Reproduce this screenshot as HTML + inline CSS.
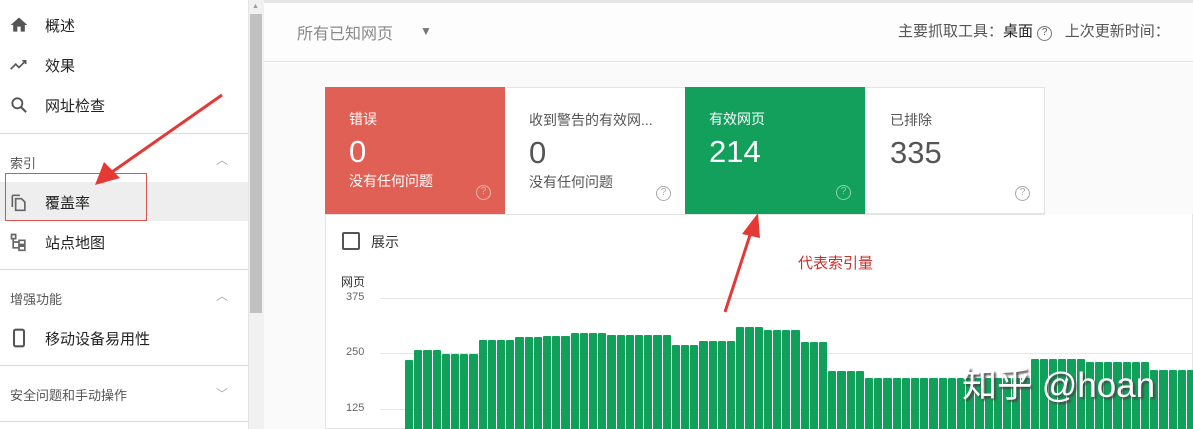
<!DOCTYPE html>
<html><head><meta charset="utf-8">
<style>
*{margin:0;padding:0;box-sizing:border-box}
body{width:1193px;height:429px;overflow:hidden;background:#fff;font-family:"Liberation Sans","Noto Sans CJK SC",sans-serif;position:relative;color:#333}
.abs{position:absolute}
.nav{position:absolute;left:0;width:248px;height:40px;font-size:15px;color:#222}
.nav span{position:absolute;left:45px;top:10px}
.nav svg{position:absolute;left:9px;top:10px}
.sec{position:absolute;left:10px;font-size:13px;color:#555}
.chev{position:absolute;left:216px;font-size:12px;color:#aaa}
.hr{position:absolute;left:0;width:248px;height:1px;background:#ddd}
.card{position:absolute;top:87px;width:180px;height:127px;padding:22px 24px}
.card .t{font-size:14px}
.card .n{font-size:31px;margin-top:6px;line-height:34px}
.card .s{font-size:14px;margin-top:2px}
.card .q{position:absolute;right:14px;top:98px;width:15px;height:15px;border:1.5px solid;border-radius:50%;font-size:10px;text-align:center;line-height:12px}
.grid{position:absolute;left:380px;width:813px;height:1px;background:#e6e6e6}
.yl{position:absolute;left:346px;font-size:11px;color:#666}
</style></head><body>
<div class="nav" style="top:5px"><svg width="20" height="20" viewBox="0 0 24 24"><path d="M10 20v-6h4v6h5v-8h3L12 3 2 12h3v8z" fill="#555"/></svg><span>概述</span></div>
<div class="nav" style="top:45px"><svg width="20" height="20" viewBox="0 0 24 24"><path d="M2 17l6-6 4 4 8-8M16 7h4v4" fill="none" stroke="#555" stroke-width="2"/></svg><span>效果</span></div>
<div class="nav" style="top:85px"><svg width="20" height="20" viewBox="0 0 24 24"><circle cx="10" cy="10" r="6" fill="none" stroke="#555" stroke-width="2.2"/><path d="M14.5 14.5l6 6" stroke="#555" stroke-width="2.5"/></svg><span>网址检查</span></div>
<div class="hr" style="top:133px"></div>
<div class="sec" style="top:153px">索引</div><div class="chev" style="top:151px">︿</div>
<div class="abs" style="left:0;top:182px;width:248px;height:39px;background:#eeeeee"></div>
<div class="nav" style="top:182px"><svg width="20" height="20" viewBox="0 0 24 24"><path d="M4 4v14M4 4h9" fill="none" stroke="#666" stroke-width="2"/><path d="M8 8h7l4 4v10H8z" fill="none" stroke="#666" stroke-width="2"/></svg><span>覆盖率</span></div>
<div class="abs" style="left:5px;top:173px;width:142px;height:48px;border:1.5px solid #d9534f"></div>
<div class="nav" style="top:222px"><svg width="20" height="20" viewBox="0 0 24 24"><path d="M3 3h5v5H3zM12 10h7v5h-7zM12 17h7v5h-7zM5 8v11h7M5 12h7" fill="none" stroke="#666" stroke-width="2"/></svg><span>站点地图</span></div>
<div class="hr" style="top:269px"></div>
<div class="sec" style="top:289px">增强功能</div><div class="chev" style="top:287px">︿</div>
<div class="nav" style="top:318px"><svg width="20" height="20" viewBox="0 0 24 24"><rect x="6" y="2" width="12" height="20" rx="2" fill="none" stroke="#555" stroke-width="2.5"/></svg><span>移动设备易用性</span></div>
<div class="hr" style="top:365px"></div>
<div class="sec" style="top:385px">安全问题和手动操作</div><div class="chev" style="top:385px">﹀</div>
<div class="hr" style="top:421px"></div>
<div class="abs" style="left:248px;top:0;width:16px;height:429px;background:#f1f1f1;border-left:1px solid #e4e4e4"></div>
<div class="abs" style="left:250px;top:14px;width:12px;height:299px;background:#c1c1c1"></div>
<div class="abs" style="left:252px;top:3px;font-size:7px;color:#999">▲</div>
<div class="abs" style="left:264px;top:0;width:929px;height:62px;background:#fdfdfd;border-bottom:1px solid #e0e0e0;border-top:3px solid #e6e6e6"></div>
<div class="abs" style="left:297px;top:20px;font-size:16px;color:#888">所有已知网页</div>
<div class="abs" style="left:420px;top:24px;font-size:12px;color:#777">▼</div>
<div class="abs" style="left:898px;top:20px;font-size:15px;color:#555;white-space:nowrap">主要抓取工具：<b style="color:#222;font-weight:normal">桌面</b> <span style="display:inline-block;width:15px;height:15px;border:1.5px solid #777;border-radius:50%;font-size:10px;text-align:center;line-height:12px;vertical-align:1px">?</span>&nbsp;&nbsp; 上次更新时间：</div>
<div class="abs" style="left:264px;top:63px;width:929px;height:366px;background:#fafafa"></div>
<div class="abs" style="left:325px;top:87px;width:868px;height:342px;background:#fff;border:1px solid #e4e4e4"></div>
<div class="abs" style="left:1045px;top:87px;width:148px;height:127px;background:#fafafa"></div>
<div class="card" style="left:325px;background:#e06055;color:#fff"><div class="t">错误</div><div class="n">0</div><div class="s">没有任何问题</div><div class="q" style="border-color:#f3b6b0;color:#f3b6b0">?</div></div>
<div class="card" style="left:505px;background:#fff;color:#555;border-top:1px solid #e4e4e4"><div class="t">收到警告的有效网...</div><div class="n">0</div><div class="s">没有任何问题</div><div class="q" style="border-color:#aaa;color:#aaa">?</div></div>
<div class="card" style="left:685px;background:#12a05c;color:#fff"><div class="t">有效网页</div><div class="n">214</div><div class="q" style="border-color:#8fd4b0;color:#8fd4b0">?</div></div>
<div class="card" style="left:865px;background:#fff;color:#555;border:1px solid #e4e4e4"><div class="t">已排除</div><div class="n">335</div><div class="q" style="border-color:#aaa;color:#aaa">?</div></div>
<div class="abs" style="left:325px;top:214px;width:720px;height:1px;background:#e4e4e4"></div>
<div class="abs" style="left:342px;top:232px;width:18px;height:18px;border:2px solid #555;border-radius:2px"></div>
<div class="abs" style="left:371px;top:232px;font-size:14px;color:#333">展示</div>
<div class="abs" style="left:341px;top:273px;font-size:12px;color:#333">网页</div>
<div class="grid" style="top:298px"></div><div class="grid" style="top:353px"></div><div class="grid" style="top:409px"></div>
<div class="yl" style="top:291px">375</div><div class="yl" style="top:346px">250</div><div class="yl" style="top:402px">125</div>
<div id="bars"></div>
<div class="abs" style="left:798px;top:252px;font-size:15px;color:#c9302c">代表索引量</div>
<div class="abs" style="left:962px;top:357px;font-size:35px;color:#fff;text-shadow:2px 2px 2px #444;white-space:nowrap">知乎 @hoan</div>
<svg class="abs" style="left:0;top:0" width="1193" height="429">
<path d="M222 95 L112 172" stroke="#e53935" stroke-width="3"/>
<polygon points="95,185 104,162 120,178" fill="#e53935"/>
<path d="M725 312 L751 232" stroke="#e53935" stroke-width="3"/>
<polygon points="758,213 742,234 760,238" fill="#e53935"/>
</svg>
<script>
var seg=[[405,414,360],[414,441,350],[441,479,354],[479,515,340],[515,543,337],[543,571,336],[571,607,333],[607,672,335],[672,700,345],[700,736,341],[736,764,327],[764,802,330],[802,829,342],[829,866,371],[866,1030,378],[1030,1087,359],[1087,1152,362],[1152,1193,370]];
var h='';
for(var x=405;x<1190;x+=9.2){var y=370;for(var i=0;i<seg.length;i++){if(x+4>=seg[i][0]&&x+4<seg[i][1]){y=seg[i][2];}}
h+='<div style="position:absolute;left:'+x.toFixed(1)+'px;top:'+y+'px;width:8.2px;height:'+(429-y)+'px;background:#11a05a;border-radius:1px 1px 0 0"></div>';}
document.getElementById('bars').innerHTML=h;
</script>
</body></html>
